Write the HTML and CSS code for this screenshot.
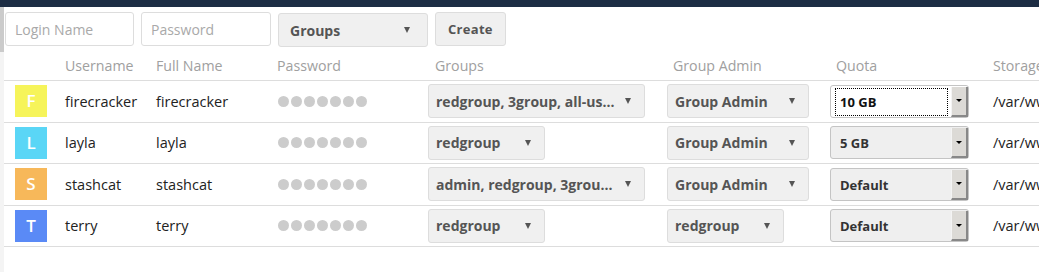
FILE: index.html
```html
<!DOCTYPE html>
<html lang="en">
<head>
    <meta charset="UTF-8">
    <title>Users</title>
    <link rel="stylesheet" href="styles.css">
</head>
<body>
    <div class="topbar"></div>
    <div class="page">
        <div class="scrollbar"><div class="scrollbar-thumb"></div></div>
        <div class="content">
            <form class="newuser" autocomplete="off">
                <input class="field" type="text" placeholder="Login Name">
                <input class="field field-pass" type="text" placeholder="Password">
                <span class="multiselect new-groups">Groups <span class="caret"></span></span>
                <button type="button" class="btn">Create</button>
            </form>

            <div class="userlist">
                <div class="row head">
                    <div></div>
                    <div>Username</div>
                    <div>Full Name</div>
                    <div>Password</div>
                    <div class="pad-select">Groups</div>
                    <div class="pad-admin">Group Admin</div>
                    <div class="pad-admin">Quota</div>
                    <div>Storage Location</div>
                </div>

                <div class="row">
                    <div><span class="avatar yellow">F</span></div>
                    <div>firecracker</div>
                    <div>firecracker</div>
                    <div class="dots"><i></i><i></i><i></i><i></i><i></i><i></i><i></i></div>
                    <div><span class="multiselect wide">redgroup, 3group, all-us... <span class="caret"></span></span></div>
                    <div><span class="multiselect admin">Group Admin <span class="caret"></span></span></div>
                    <div>
                        <span class="quota focused">
                            <span class="quota-value">10 GB</span>
                            <span class="quota-btn"><span class="mini-caret"></span></span>
                        </span>
                    </div>
                    <div>/var/www/owncloud/data/firecracker</div>
                </div>

                <div class="row">
                    <div><span class="avatar cyan">L</span></div>
                    <div>layla</div>
                    <div>layla</div>
                    <div class="dots"><i></i><i></i><i></i><i></i><i></i><i></i><i></i></div>
                    <div><span class="multiselect narrow">redgroup <span class="caret"></span></span></div>
                    <div><span class="multiselect admin">Group Admin <span class="caret"></span></span></div>
                    <div>
                        <span class="quota">
                            <span class="quota-value">5 GB</span>
                            <span class="quota-btn"><span class="mini-caret"></span></span>
                        </span>
                    </div>
                    <div>/var/www/owncloud/data/layla</div>
                </div>

                <div class="row">
                    <div><span class="avatar orange">S</span></div>
                    <div>stashcat</div>
                    <div>stashcat</div>
                    <div class="dots"><i></i><i></i><i></i><i></i><i></i><i></i><i></i></div>
                    <div><span class="multiselect wide">admin, redgroup, 3grou... <span class="caret"></span></span></div>
                    <div><span class="multiselect admin">Group Admin <span class="caret"></span></span></div>
                    <div>
                        <span class="quota">
                            <span class="quota-value">Default</span>
                            <span class="quota-btn"><span class="mini-caret"></span></span>
                        </span>
                    </div>
                    <div>/var/www/owncloud/data/stashcat</div>
                </div>

                <div class="row">
                    <div><span class="avatar blue">T</span></div>
                    <div>terry</div>
                    <div>terry</div>
                    <div class="dots"><i></i><i></i><i></i><i></i><i></i><i></i><i></i></div>
                    <div><span class="multiselect narrow">redgroup <span class="caret"></span></span></div>
                    <div><span class="multiselect narrow">redgroup <span class="caret"></span></span></div>
                    <div>
                        <span class="quota">
                            <span class="quota-value">Default</span>
                            <span class="quota-btn"><span class="mini-caret"></span></span>
                        </span>
                    </div>
                    <div>/var/www/owncloud/data/terry</div>
                </div>
            </div>
        </div>
    </div>
</body>
</html>
```

FILE: styles.css
```css
body {
    margin: 0;
    font-family: 'Open Sans', 'Liberation Sans', sans-serif;
    color: #222;
    background: #fff;
    overflow: hidden;
}
.topbar {
    height: 7px;
    background: #1d2d44;
}
.page {
    display: flex;
}
.scrollbar {
    width: 4px;
    height: 265px;
    flex-shrink: 0;
    background: #f4f4f4;
}
.scrollbar-thumb {
    height: 45px;
    background: #cbcbcb;
}
.content {
    flex: 1;
    min-width: 0;
}

/* new user form */
.newuser {
    display: flex;
    gap: 7px;
    height: 40px;
    box-sizing: border-box;
    padding: 5px 0 0 1px;
    margin: 0;
}
.field {
    width: 129px;
    height: 34px;
    box-sizing: border-box;
    border: 1px solid #ddd;
    border-radius: 3px;
    padding: 0 9px;
    font-family: inherit;
    font-size: 14px;
    color: #222;
    outline: none;
}
.field-pass {
    width: 130px;
}
.field::placeholder {
    color: #a9a9a9;
}
.btn {
    height: 34px;
    padding: 0 12px;
    background: #f0f0f0;
    border: 1px solid #ddd;
    border-radius: 3px;
    font-family: inherit;
    font-size: 13px;
    font-weight: bold;
    color: #555;
    letter-spacing: 0.3px;
}

/* dropdowns */
.multiselect {
    display: inline-flex;
    align-items: center;
    justify-content: space-between;
    height: 34px;
    box-sizing: border-box;
    padding: 0 13px 0 7px;
    background: #f0f0f0;
    border: 1px solid #ddd;
    border-radius: 3px;
    font-size: 14px;
    font-weight: bold;
    color: #555;
    white-space: nowrap;
}
.multiselect.new-groups {
    width: 150px;
    margin-top: 1px;
    padding: 0 17px 0 11px;
}
.multiselect.wide { width: 217px; }
.multiselect.admin { width: 142px; }
.multiselect.narrow { width: 117px; }
.caret {
    width: 0;
    height: 0;
    border-left: 3.5px solid transparent;
    border-right: 3.5px solid transparent;
    border-top: 6px solid #555;
}

/* quota select */
.quota {
    display: flex;
    width: 139px;
    height: 33px;
    box-sizing: border-box;
    border: 1px solid #c4c4c4;
    border-radius: 3px;
    background: #efefef;
    padding: 1px 0 0 0;
}
.quota.focused {
    background: #fff;
}
.quota-value {
    flex: 1;
    display: flex;
    align-items: center;
    margin: 2px 4px 2px 5px;
    padding-left: 4px;
    font-size: 13px;
    font-weight: bold;
    color: #333;
}
.quota.focused .quota-value {
    outline: 1px dotted #000;
    color: #111;
}
.quota-btn {
    width: 14px;
    display: flex;
    align-items: center;
    justify-content: center;
    background: #dcdad6;
    border-right: 2px solid #888;
    border-bottom: 2px solid #888;
    border-left: 1px solid #f4f4f4;
}
.mini-caret {
    width: 0;
    height: 0;
    border-left: 3px solid transparent;
    border-right: 3px solid transparent;
    border-top: 3px solid #000;
}

/* user table */
.row {
    display: grid;
    grid-template-columns: 61px 91px 121px 151px 239px 163px 163px 260px;
    align-items: center;
    height: 41.5px;
    box-sizing: border-box;
    border-bottom: 1px solid #ddd;
    font-size: 14.5px;
    white-space: nowrap;
}
.row > div:first-child {
    padding-left: 11px;
}
.row.head {
    height: 34px;
    align-items: end;
    padding-bottom: 5px;
    font-size: 14.2px;
    color: #a0a0a0;
}
.pad-select { padding-left: 7px; }
.pad-admin { padding-left: 6px; }
.avatar {
    display: block;
    width: 32px;
    height: 32px;
    line-height: 32px;
    text-align: center;
    color: #fff;
    font-size: 17px;
    font-weight: 600;
}
.yellow { background: #f6f45a; }
.cyan { background: #5ad6f6; }
.orange { background: #f7b85a; }
.blue { background: #5a8af6; }
.dots {
    display: flex;
    gap: 2px;
    padding-left: 1px;
}
.dots i {
    width: 11px;
    height: 11px;
    border-radius: 50%;
    background: #ccc;
}
```
